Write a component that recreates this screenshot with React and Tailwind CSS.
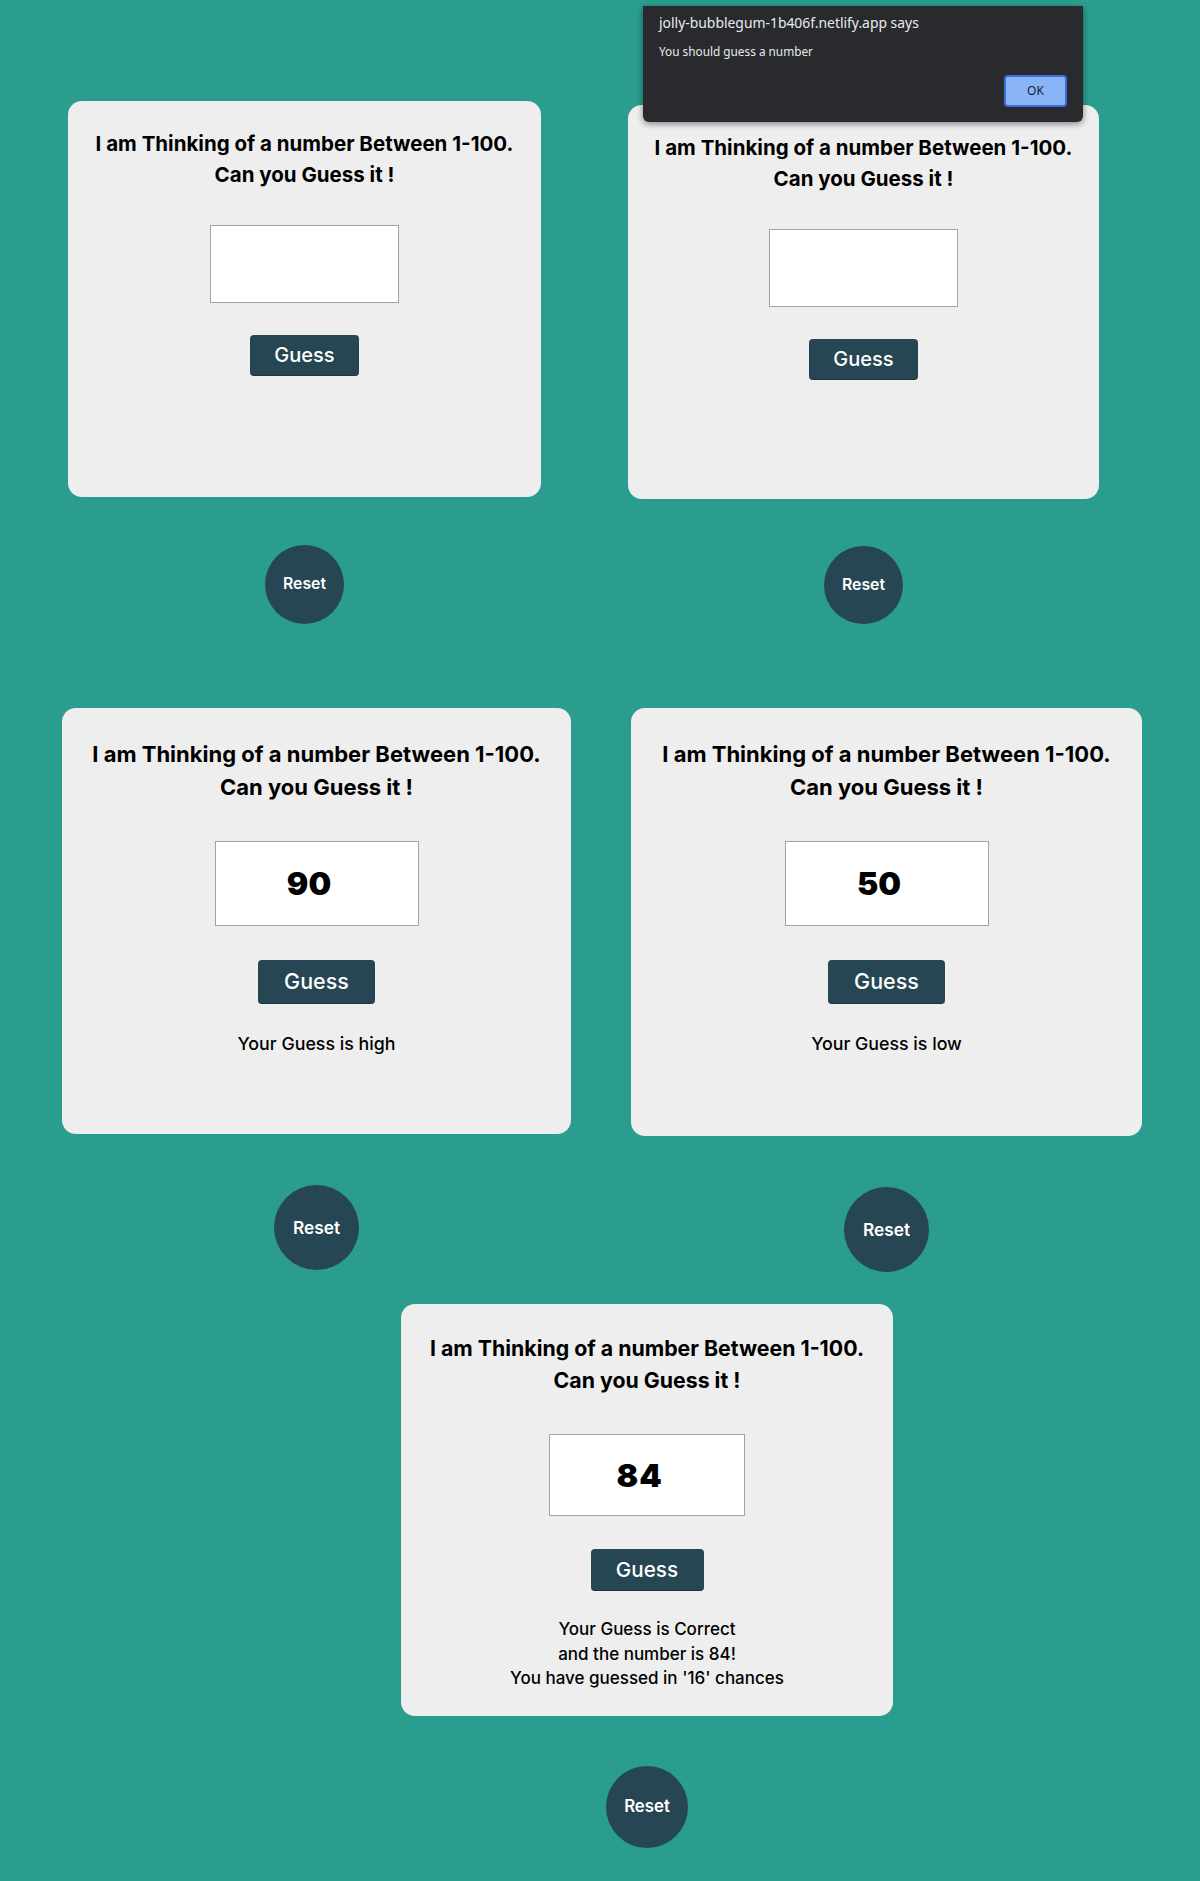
import React from "react"

const FONT = { fontFamily: "Inter, 'Open Sans', sans-serif" }

const sizes = {
  sm: {
    card: "pt-[28px]",
    title: "text-[20.5px] leading-[30.5px]",
    input: "mt-[35px] w-[189px] h-[78px] text-[32px] pr-[15px]",
    guess: "mt-[32px] w-[109px] h-[41px] text-[20px]",
    msg: "mt-[26px] text-[17px] leading-[24.5px]",
    reset: "text-[15.8px]",
  },
  md: {
    card: "pt-[30px]",
    title: "text-[22px] leading-[32.5px]",
    input: "mt-[38px] w-[204px] h-[85px] text-[32px] pr-[15px]",
    guess: "mt-[34px] w-[117px] h-[44px] text-[21.5px]",
    msg: "mt-[27px] text-[17.8px] leading-[26px]",
    reset: "text-[17.3px]",
  },
  lg: {
    card: "pt-[29px]",
    title: "text-[21.3px] leading-[31.5px]",
    input: "mt-[38px] w-[196px] h-[82px] text-[32px] tracking-[1px] pr-[15px]",
    guess: "mt-[33px] w-[113px] h-[42px] text-[20.7px]",
    msg: "mt-[26px] text-[17px] leading-[24.5px]",
    reset: "text-[16.8px]",
  },
}

function GameCard({ size, cardClass, resetClass, value, children }) {
  const s = sizes[size]
  return (
    <div className="flex flex-col items-center">
      <div className={`bg-[#eeeeee] rounded-[14px] flex flex-col items-center ${s.card} ${cardClass}`}>
        <h2 className={`font-bold text-black text-center ${s.title}`}>
          I am Thinking of a number Between 1-100.
          <br />
          Can you Guess it !
        </h2>
        <input
          readOnly
          value={value}
          className={`bg-white border border-[#a3a3a3] text-center font-black text-black outline-none ${s.input}`}
        />
        <button className={`bg-[#264653] text-white font-medium rounded-[4px] border-b border-[#1c353e] ${s.guess}`}>
          Guess
        </button>
        {children && <p className={`text-center font-medium text-black ${s.msg}`}>{children}</p>}
      </div>
      <button className={`bg-[#264653] text-white font-semibold rounded-full ${s.reset} ${resetClass}`}>
        Reset
      </button>
    </div>
  )
}

function AlertBox() {
  return (
    <div
      className="absolute left-[643px] top-[6px] w-[440px] h-[116px] bg-[#292a2d] rounded-b-[6px] shadow-[0_2px_6px_rgba(0,0,0,0.45)] px-[16px] pt-[7px]"
      style={{ fontFamily: "'Noto Sans', 'Open Sans', sans-serif" }}
    >
      <div className="text-[13.9px] leading-[20px] text-[#e8eaed]">jolly-bubblegum-1b406f.netlify.app says</div>
      <div className="mt-[9px] text-[11.8px] leading-[18px] text-[#e8eaed]">You should guess a number</div>
      <div className="flex justify-end mt-[15px]">
        <button className="w-[63px] h-[32px] bg-[#8ab4f8] border-2 border-[#3b6fd8] rounded-[4px] text-[12px] text-[#202124]">
          OK
        </button>
      </div>
    </div>
  )
}

export default function App() {
  return (
    <div className="relative min-h-[1881px] bg-[#2a9d8f] overflow-hidden" style={FONT}>
      <div className="flex items-start pt-[101px] pl-[68px] gap-[87px]">
        <GameCard size="sm" value="" cardClass="w-[473px] h-[396px]" resetClass="mt-[47.5px] w-[79px] h-[79px]" />
        <div className="mt-[4px]">
          <GameCard size="sm" value="" cardClass="w-[471px] h-[394px]" resetClass="mt-[47px] w-[79px] h-[78px]" />
        </div>
      </div>

      <div className="flex items-start mt-[84px] pl-[62px] gap-[60px]">
        <GameCard size="md" value="90" cardClass="w-[509px] h-[426px]" resetClass="mt-[51px] w-[85px] h-[85px]">
          Your Guess is high
        </GameCard>
        <GameCard size="md" value="50" cardClass="w-[511px] h-[428px]" resetClass="mt-[51px] w-[85px] h-[85px]">
          Your Guess is low
        </GameCard>
      </div>

      <div className="flex mt-[32px] pl-[401px]">
        <GameCard size="lg" value="84" cardClass="w-[492px] h-[412px]" resetClass="mt-[50px] w-[82px] h-[82px]">
          Your Guess is Correct
          <br />
          and the number is 84!
          <br />
          You have guessed in '16' chances
        </GameCard>
      </div>

      <AlertBox />
    </div>
  )
}
